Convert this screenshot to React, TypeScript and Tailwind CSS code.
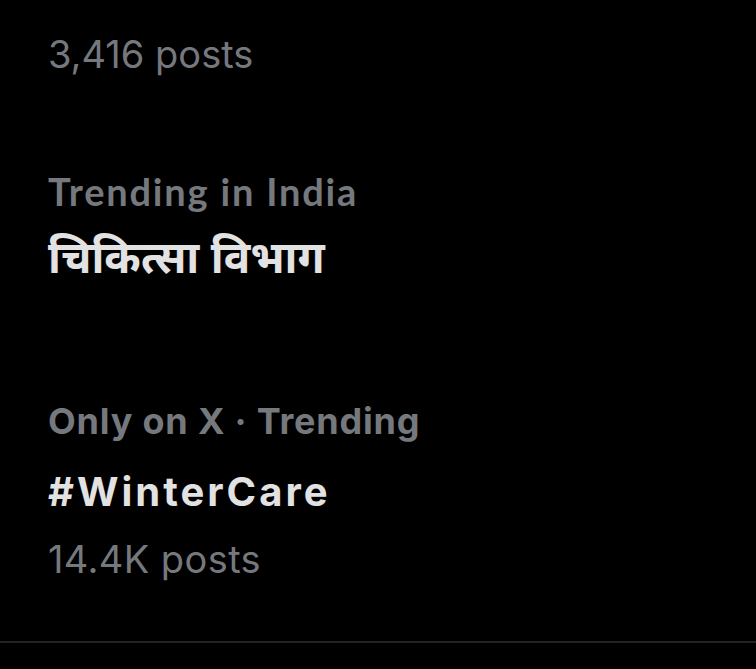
import React from 'react';

const sans = "font-['Inter','Noto_Sans','Noto_Sans_Devanagari',sans-serif]";

export default function App() {
  return (
    <div className="h-[669px] w-[756px] overflow-hidden bg-black">
      {/* Previous trend (cut off) */}
      <div className="px-12 pt-[20px]">
        <div className={`${sans} text-[38px] leading-[68px] text-[#75797e]`}>3,416 posts</div>
      </div>

      {/* Trending in India */}
      <div className="px-12 pt-[69px]">
        <div className="font-['Lato',sans-serif] text-[38px] font-bold leading-[68px] tracking-[1.8px] text-[#75797e]">
          Trending in India
        </div>
        <div className="mt-[4px] font-['Noto_Sans_Devanagari','Noto_Sans','Lohit_Devanagari',sans-serif] text-[44px] font-bold leading-[68px] text-[#e2e2e2]">
          चिकित्सा विभाग
        </div>
      </div>

      {/* Only on X */}
      <div className="border-b-2 border-[#222324] px-12 pt-[90px] pb-[48px]">
        <div className={`${sans} text-[36px] font-bold leading-[68px] tracking-[0.8px] text-[#75797e]`}>
          Only on X · Trending
        </div>
        <div className={`${sans} mt-[3px] text-[40px] font-bold leading-[68px] tracking-[3px] text-[#e2e2e2]`}>
          #WinterCare
        </div>
        <div className={`${sans} -mt-[1px] text-[38px] leading-[68px] tracking-[0.4px] text-[#75797e]`}>14.4K posts</div>
      </div>
    </div>
  );
}
